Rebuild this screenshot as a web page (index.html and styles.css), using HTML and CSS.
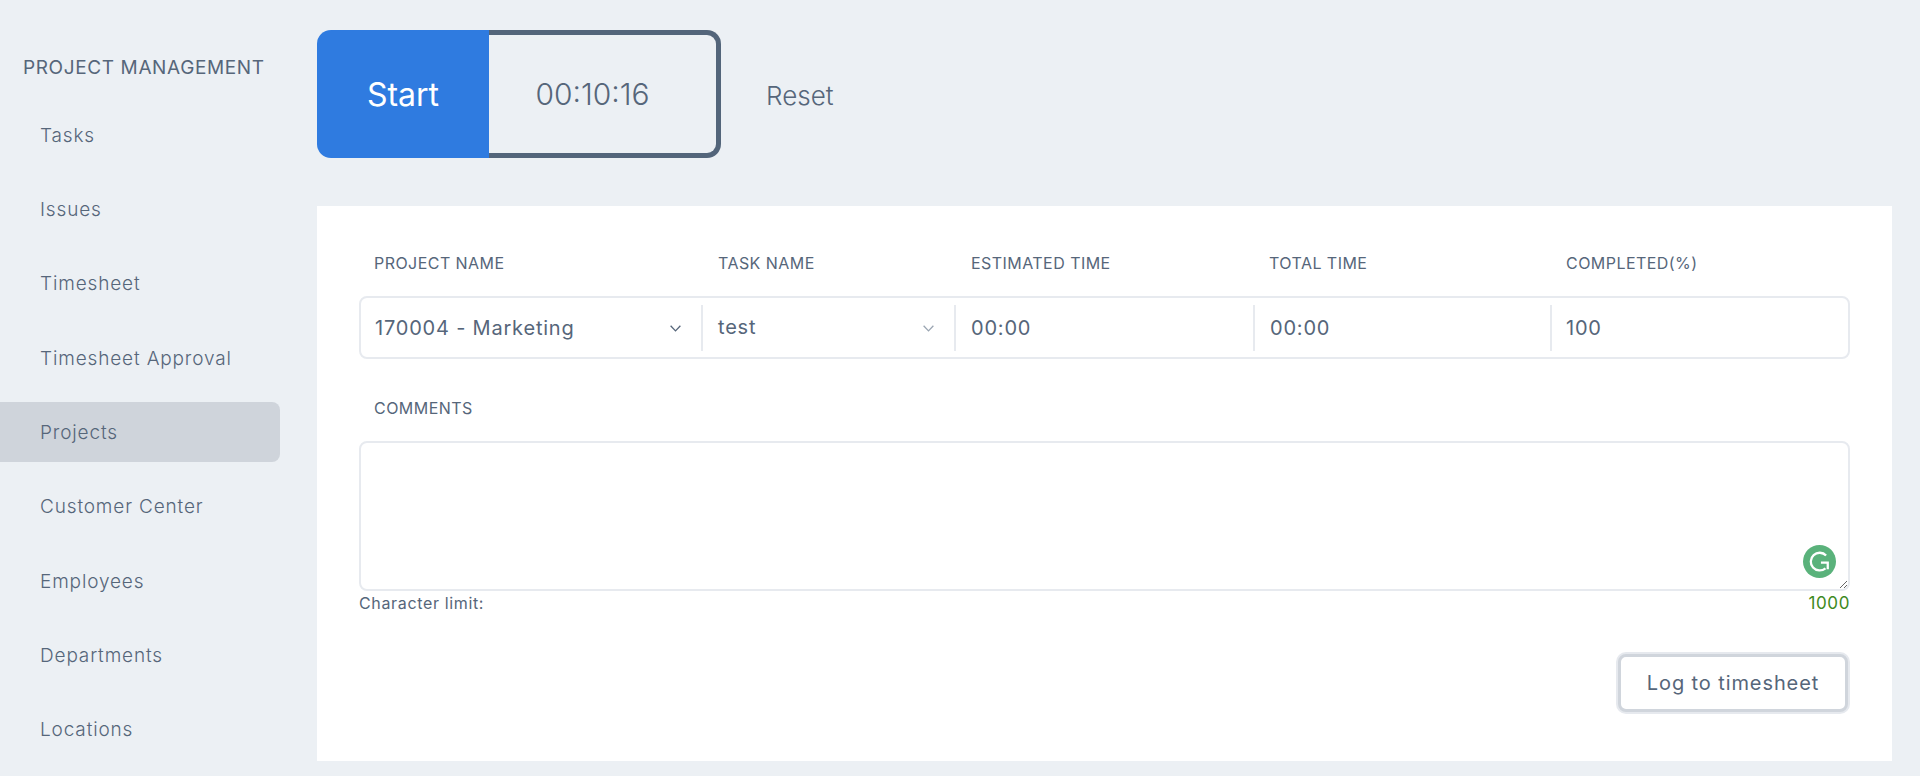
FILE: index.html
```html
<!DOCTYPE html>
<html lang="en">
<head>
<meta charset="utf-8">
<title>Timesheet</title>
<link rel="stylesheet" href="styles.css">
</head>
<body>
<div class="app">
  <aside class="sidebar">
    <h2 class="side-title">PROJECT MANAGEMENT</h2>
    <nav class="nav">
      <a class="nav-item">Tasks</a>
      <a class="nav-item">Issues</a>
      <a class="nav-item">Timesheet</a>
      <a class="nav-item">Timesheet Approval</a>
      <a class="nav-item active">Projects</a>
      <a class="nav-item">Customer Center</a>
      <a class="nav-item">Employees</a>
      <a class="nav-item">Departments</a>
      <a class="nav-item">Locations</a>
    </nav>
  </aside>
  <main class="main">
    <div class="timer-bar">
      <div class="timer">
        <button class="start">Start</button>
        <div class="clock">00:10:16</div>
      </div>
      <a class="reset">Reset</a>
    </div>
    <section class="card">
      <div class="labels">
        <span class="label w-project">PROJECT NAME</span>
        <span class="label w-task">TASK NAME</span>
        <span class="label w-est">ESTIMATED TIME</span>
        <span class="label w-total">TOTAL TIME</span>
        <span class="label w-done">COMPLETED(%)</span>
      </div>
      <div class="fields">
        <div class="field w-project sel">
          <span>170004 - Marketing</span>
          <svg class="chev" viewBox="0 0 12 8"><path d="M1.5 1.5 6 6.2l4.5-4.7" /></svg>
        </div>
        <div class="field w-task sel">
          <span class="raised">test</span>
          <svg class="chev light" viewBox="0 0 12 8"><path d="M1.5 1.5 6 6.2l4.5-4.7" /></svg>
        </div>
        <div class="field w-est">00:00</div>
        <div class="field w-total">00:00</div>
        <div class="field w-done last">100</div>
      </div>
      <div class="label comments-label">COMMENTS</div>
      <div class="comment-wrap">
        <textarea class="comments"></textarea>
        <svg class="grammarly" viewBox="0 0 32 32">
          <circle cx="16" cy="16" r="16" fill="#5ab27b"/>
          <path d="M22.4 10.2A8.6 8.6 0 1 0 21.8 22.6" fill="none" stroke="#fff" stroke-width="2.2"/>
          <path d="M17.4 17h6.6v6.6" fill="none" stroke="#fff" stroke-width="2.2"/>
        </svg>
      </div>
      <div class="limit"><span>Character limit:</span><span class="count">1000</span></div>
      <div class="actions"><button class="log">Log to timesheet</button></div>
    </section>
  </main>
</div>
</body>
</html>
```

FILE: styles.css
```css
* { box-sizing: border-box; }
html, body { margin: 0; height: 776px; overflow: hidden; }
body {
  background: #ecf0f4;
  color: #56667a;
  font-family: "Inter", "Liberation Sans", sans-serif;
}
.app { display: flex; height: 776px; }

.sidebar { width: 317px; flex: none; padding-top: 55px; }
.side-title {
  margin: 0 0 25px 23px;
  font-size: 19px;
  line-height: 25px;
  font-weight: 400;
  letter-spacing: 0.62px;
  color: #56667a;
}
.nav { width: 280px; display: flex; flex-direction: column; gap: 14.35px; }
.nav-item {
  display: flex;
  align-items: center;
  height: 60px;
  padding-left: 40px;
  font-size: 19px;
  font-weight: 300;
  letter-spacing: 0.85px;
  border-radius: 0 8px 8px 0;
  color: #56667a;
}
.nav-item.active { background: #cfd4db; }

.main { flex: 1; padding: 30px 28px 0 0; }
.timer-bar { display: flex; align-items: center; height: 128px; margin-bottom: 48px; }
.timer { display: flex; width: 404px; height: 128px; }
.start {
  width: 172px;
  border: 0;
  border-radius: 14px 0 0 14px;
  background: #2f7be0;
  color: #fff;
  font: 400 32px "Inter", "Liberation Sans", sans-serif;
}
.clock {
  flex: 1;
  display: flex;
  align-items: center;
  justify-content: center;
  padding-right: 20px;
  border: 5px solid #53657a;
  border-left: 0;
  border-radius: 0 14px 14px 0;
  font-size: 30px;
  font-weight: 300;
  color: #56667a;
}
.reset { margin: 0 0 0 45px; padding-top: 2px; font-size: 26px; font-weight: 300; color: #56667a; }

.card {
  background: #fff;
  height: 555px;
  padding: 46px 42px 0 42px;
}
.labels, .fields { display: flex; }
.label { font-size: 16px; line-height: 22px; letter-spacing: 0.45px; color: #56667a; }
.labels { padding-left: 15px; }
.labels .w-project { width: 344px; }
.labels .w-task { width: 253px; }
.labels .w-est { width: 298px; }
.labels .w-total { width: 297px; }
.labels .w-done { flex: 1; }

.fields {
  margin-top: 22px;
  height: 63px;
  align-items: center;
  border: 2px solid #e7eaef;
  border-radius: 8px;
  font-size: 20px;
  color: #56667a;
}
.field {
  height: 46px;
  display: flex;
  align-items: center;
  justify-content: space-between;
  padding: 1px 15px 0 14px;
  border-right: 2px solid #e7eaef;
  letter-spacing: 0.8px;
}
.fields .w-project { width: 342px; }
.fields .w-task { width: 253px; padding-left: 15px; }
.fields .w-est { width: 299px; padding-left: 15px; }
.fields .w-total { width: 297px; padding-left: 15px; }
.fields .w-done { flex: 1; }
.field.last { border-right: 0; }
.raised { position: relative; top: -1px; }
.chev { width: 13px; height: 9px; fill: none; stroke: #56667a; stroke-width: 1.2; margin-right: 4px; }
.chev.light { stroke: #9aa5b2; }

.comments-label { margin: 38px 0 0 15px; }
.comment-wrap { position: relative; margin-top: 22px; height: 150px; }
.comments {
  display: block;
  width: 100%;
  height: 150px;
  border: 2px solid #e7eaef;
  border-radius: 8px;
  background: #fff;
  outline: 0;
}
.grammarly { position: absolute; right: 14px; bottom: 13px; width: 33px; height: 33px; }

.limit {
  display: flex;
  justify-content: space-between;
  margin-top: 2px;
  font-size: 16px;
  line-height: 20px;
  letter-spacing: 0.65px;
  color: #56667a;
}
.count { color: #3e8a22; font-size: 17px; letter-spacing: 0.6px; }
.actions { display: flex; justify-content: flex-end; margin-top: 41px; padding-right: 2px; }
.log {
  width: 230px;
  height: 58px;
  border: 3px solid #d0d5dc;
  box-shadow: 0 0 0 2px #e6e9ee;
  border-radius: 8px;
  background: #fff;
  color: #56667a;
  font: 400 20px "Inter", "Liberation Sans", sans-serif;
  letter-spacing: 0.9px;
}
```
